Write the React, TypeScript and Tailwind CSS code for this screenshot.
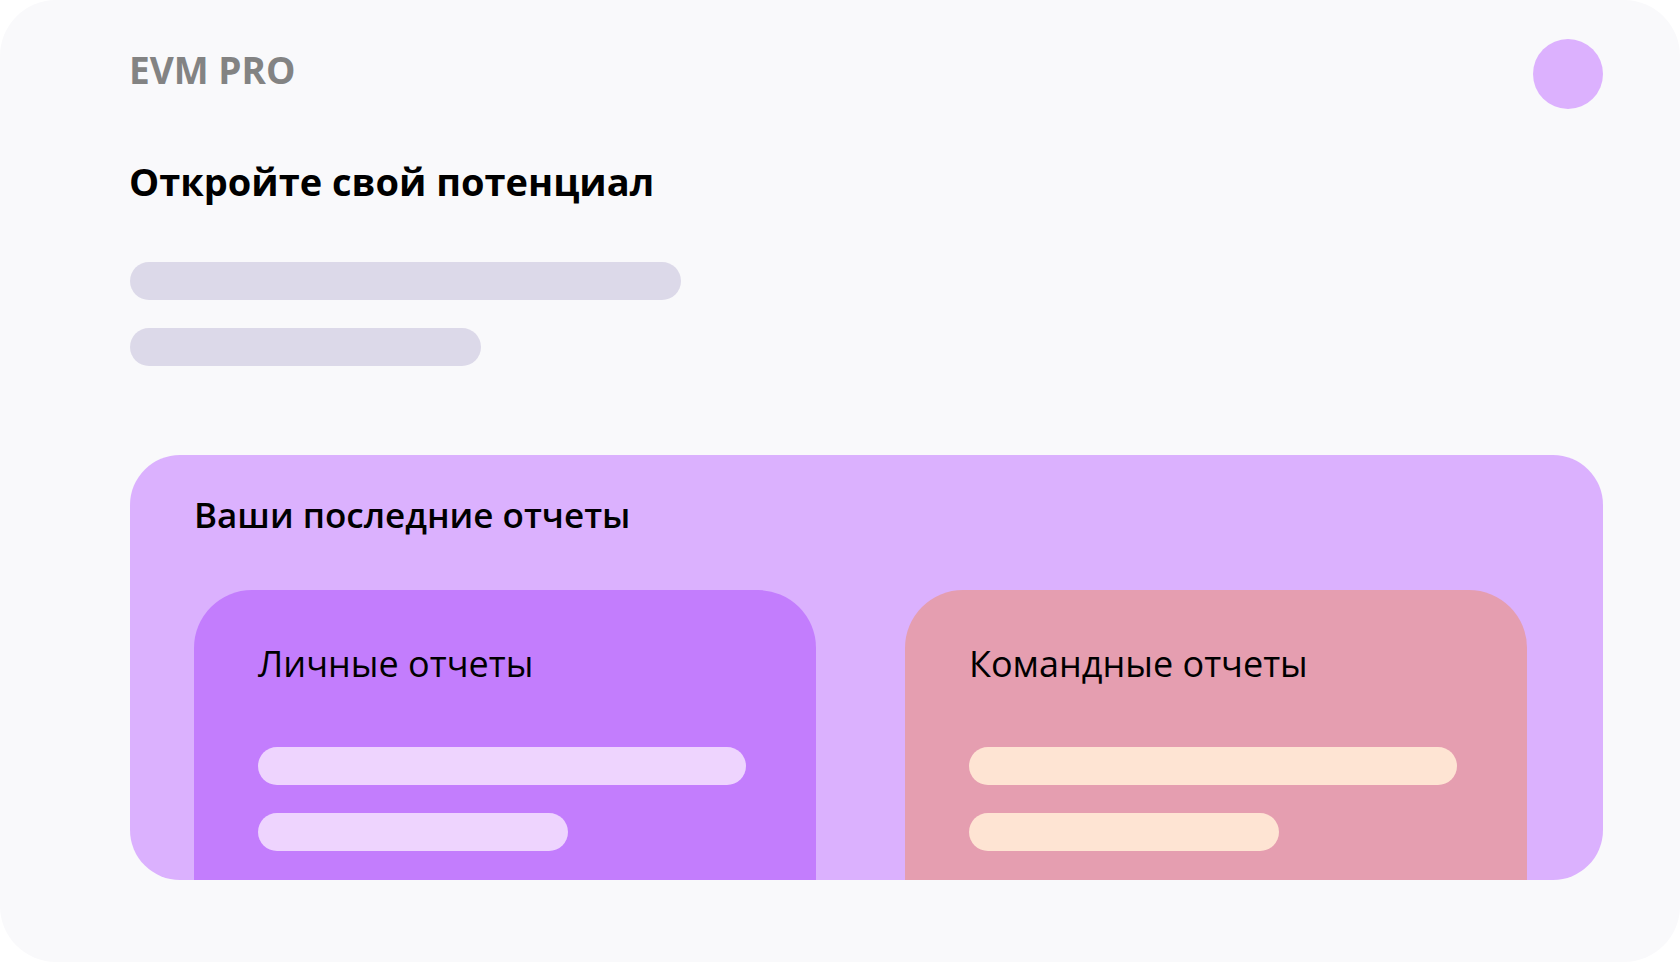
export default function App() {
  return (
    <div className="min-h-screen w-full bg-white" style={{ fontFamily: '"Open Sans", "Noto Sans", sans-serif' }}>
      <div className="flex h-[962px] w-full flex-col rounded-[56px] bg-[#f9f9fb] pl-[129px] pr-[77px]">
        {/* header */}
        <div className="flex items-start justify-between pt-[39px]">
          <div className="mt-[9px] text-[37px] font-bold leading-[44px] text-[#838383]">EVM PRO</div>
          <div className="h-[70px] w-[70px] rounded-full bg-[#dcb1fe]" />
        </div>

        <h1 className="mt-[49px] text-[38px] font-bold leading-[46px] text-black">Откройте свой потенциал</h1>

        <div className="mt-[58px] flex flex-col gap-[28px] pl-[1px]">
          <div className="h-[38px] w-[551px] rounded-full bg-[#dcd9e9]" />
          <div className="h-[38px] w-[351px] rounded-full bg-[#dcd9e9]" />
        </div>

        {/* recent reports */}
        <div className="ml-[1px] mt-[89px] flex h-[425px] flex-col overflow-hidden rounded-[50px] bg-[#dbb1fe] pl-[64px] pr-[75px] pt-[38px]">
          <h2 className="text-[35px] font-semibold leading-[44px] text-black">Ваши последние отчеты</h2>

          <div className="mt-[53px] flex flex-1 gap-[89px]">
            <ReportCard title="Личные отчеты" card="bg-[#c37dfd]" bar="bg-[#eed4fe]" />
            <ReportCard title="Командные отчеты" card="bg-[#e59eb0]" bar="bg-[#fee4d3]" />
          </div>
        </div>
      </div>
    </div>
  );
}

function ReportCard({ title, card, bar }: { title: string; card: string; bar: string }) {
  return (
    <div className={`flex w-[622px] flex-col rounded-t-[58px] pl-[64px] pt-[52px] ${card}`}>
      <h3 className="text-[36px] font-normal leading-[44px] text-black">{title}</h3>
      <div className="mt-[61px] flex flex-col gap-[28px]">
        <div className={`h-[38px] w-[488px] rounded-full ${bar}`} />
        <div className={`h-[38px] w-[310px] rounded-full ${bar}`} />
      </div>
    </div>
  );
}
